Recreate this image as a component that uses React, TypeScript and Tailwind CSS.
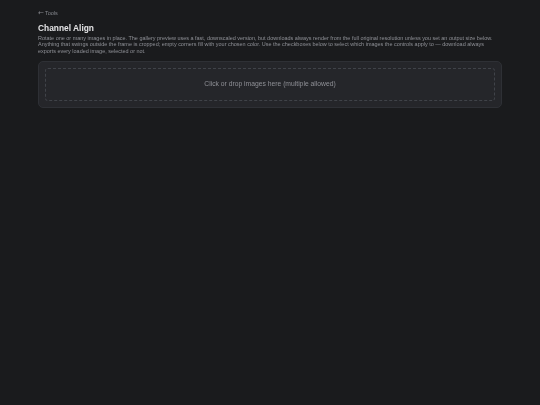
export default function App() {
  return (
    <div className="min-h-[405px] bg-[#1a1b1d] font-['Liberation_Sans',Arial,sans-serif] px-[38px] pt-[10px]">
      <a className="flex items-center gap-[1px] h-[7px] pt-[0.5px] text-[5.5px] leading-[7px] text-[#85878d] blur-[0.25px]">
        <span className="font-['DejaVu_Sans',sans-serif] text-[7px] leading-[7px]">←</span>
        <span>Tools</span>
      </a>
      <h1 className="mt-[6px] text-[8.4px] leading-[11px] font-bold text-[#e4e4e6] blur-[0.25px]">Channel Align</h1>
      <p className="mt-[1px] text-[5.48px] leading-[6.25px] text-[#8f9197] blur-[0.25px]">
        Rotate one or many images in place. The gallery preview uses a fast, downscaled version, but downloads always render from the full original resolution unless you set an output size below. Anything that swings outside the frame is cropped; empty corners fill with your chosen color. Use the checkboxes below to select which images the controls apply to — download always exports every loaded image, selected or not.
      </p>
      <div className="mt-[7px] w-[464px] h-[47px] rounded-[5px] border border-[#2e3035] bg-[#25262a] p-[6px]">
        <div className="h-full rounded-[3px] border border-dashed border-[#404349] flex items-center justify-center text-[6.75px] text-[#8f9096] blur-[0.25px]">
          Click or drop images here (multiple allowed)
        </div>
      </div>
    </div>
  );
}
